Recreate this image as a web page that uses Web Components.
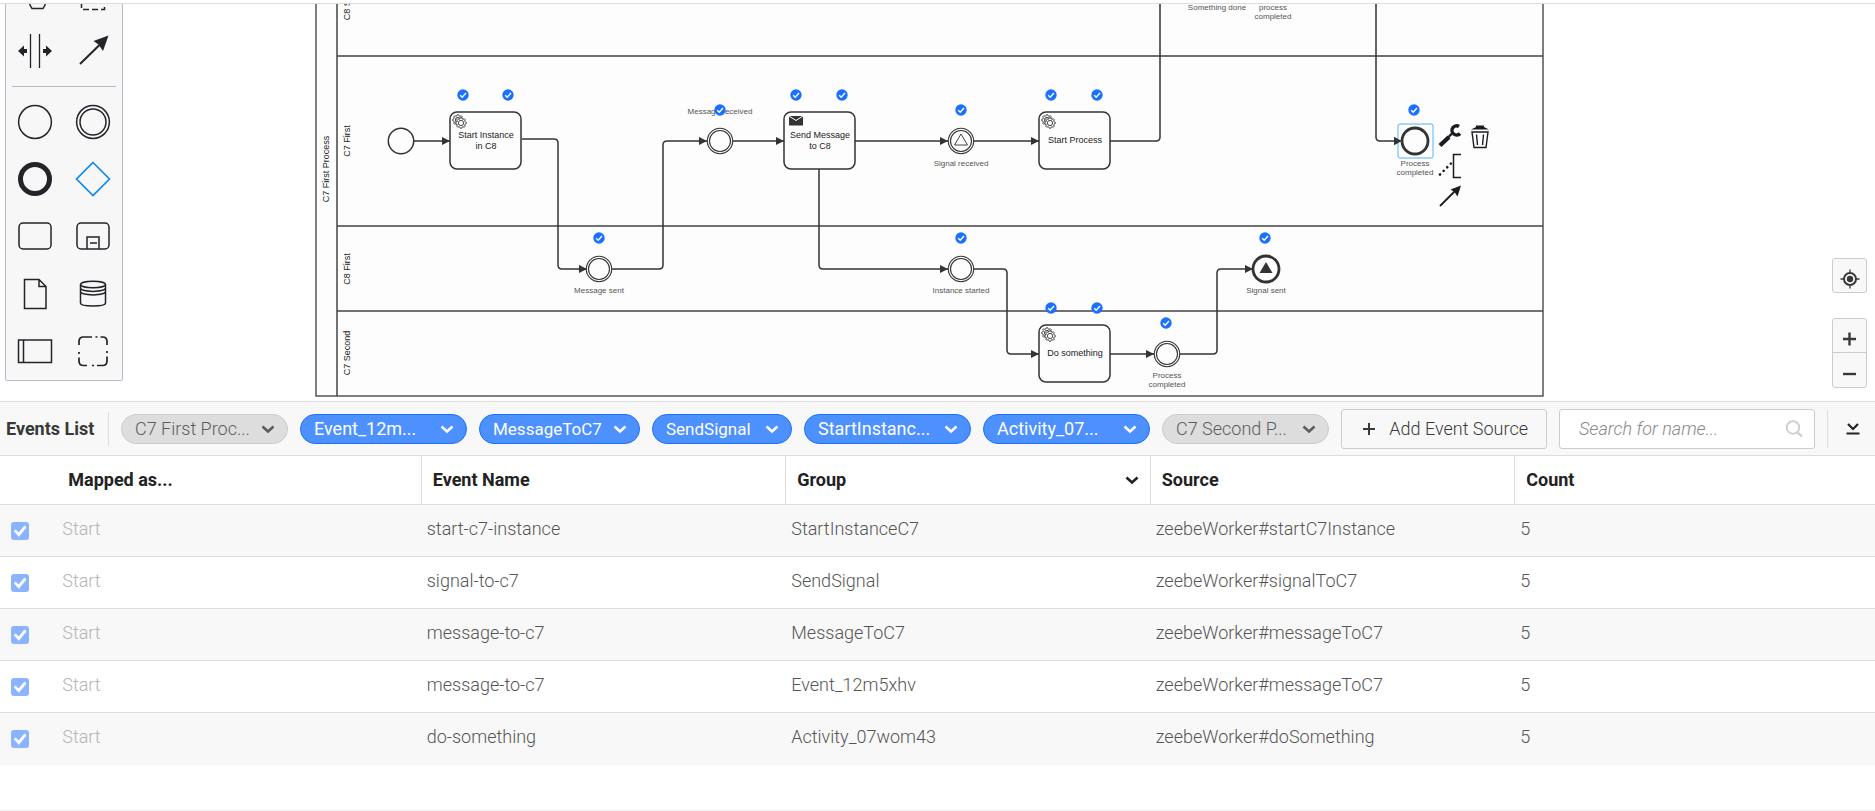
<!DOCTYPE html>
<html lang="en">
<head>
<meta charset="utf-8">
<title>Events List</title>
<style>
  html, body { margin: 0; height: 100%; }
  body {
    --ui: Roboto, "Liberation Sans", sans-serif;
    font: 18px/24px var(--ui);
    color: #222;
    background: #fff;
  }
</style>
</head>
<body>
<modeler-app>
  <diagram-canvas slot="canvas"></diagram-canvas>
  <events-toolbar slot="toolbar">
    <event-pill>C7 First Proc...</event-pill>
    <event-pill active>Event_12m...</event-pill>
    <event-pill active size="m">MessageToC7</event-pill>
    <event-pill active size="s">SendSignal</event-pill>
    <event-pill active>StartInstanc...</event-pill>
    <event-pill active>Activity_07...</event-pill>
    <event-pill>C7 Second P...</event-pill>
  </events-toolbar>
  <events-table slot="table"></events-table>
</modeler-app>

<script>
const define = (name, html) => {
  const template = document.createElement('template');
  template.innerHTML = html;
  customElements.define(name, class extends HTMLElement {
    constructor() {
      super();
      this.attachShadow({ mode: 'open' }).append(template.content.cloneNode(true));
    }
  });
};

/* ---------- shell ---------- */
define('modeler-app', `
<style>
  :host { display: flex; flex-direction: column; min-height: 100vh; box-sizing: border-box; padding-top: 3px; }
  main { flex: 1 1 0; min-height: 240px; display: flex; border-top: 1px solid #ddd; }
  ::slotted(diagram-canvas) { flex: 1; }
  section { border-top: 1px solid #ddd; border-bottom: 1px solid #eee; padding-bottom: 45px; }
</style>
<main><slot name="canvas"></slot></main>
<section><slot name="toolbar"></slot><slot name="table"></slot></section>`);

/* ---------- diagram ---------- */
const gear = (x, y) => {
  let d = '';
  for (let i = 0; i < 32; i++) {
    const a = (i - .5) * Math.PI / 16, r = i % 4 < 2 ? 5.4 : 4.2;
    d += (i ? 'L' : 'M') + (x + r * Math.cos(a)).toFixed(2) + ' ' + (y + r * Math.sin(a)).toFixed(2);
  }
  return `<path class="gear" d="${d}Z"/><circle class="gear" cx="${x}" cy="${y}" r="2.6"/>`;
};
const task = (x, y, lines, kind) => `
  <rect class="shape" x="${x}" y="${y}" width="71" height="57" rx="7"/>
  ${kind === 'send'
    ? `<path d="M${x + 5} ${y + 4}h14v9.500h-14z" fill="#333"/><path d="M${x + 5} ${y + 4}l7 4.500l7-4.500" fill="none" stroke="#fff" stroke-width="1"/>`
    : gear(x + 8, y + 8) + gear(x + 11, y + 11)}
  ${lines.map((t, i) => `<text class="task" x="${x + 36}" y="${y + (lines.length > 1 ? 26 : 31) + i * 11}">${t}</text>`).join('')}`;
const event = (x, y, kind) => kind === 'end'
  ? `<circle class="shape" cx="${x}" cy="${y}" r="13" style="stroke-width:2.800"/>`
  : `<circle class="shape ${kind === 'mid' ? 'thin' : ''}" cx="${x}" cy="${y}" r="12.700"/>` +
    (kind === 'mid' ? `<circle class="shape thin" cx="${x}" cy="${y}" r="10.500"/>` : '');
const label = (x, y, lines) => lines.map((t, i) => `<text class="label" x="${x}" y="${y + i * 9}">${t}</text>`).join('');
const side = (x, y, t) => `<text class="side" transform="translate(${x} ${y}) rotate(-90)">${t}</text>`;
const flow = d => `<path class="flow" d="${d}"/>`;
const line = d => `<path class="flow plain" d="${d}"/>`;
const check = ([x, y]) => `<g transform="translate(${x} ${y})"><circle r="5.700" fill="#1a70ff"/><path d="M-2.800 .2L-.8 2.200L3-1.900" fill="none" stroke="#fff" stroke-width="1.400"/></g>`;

define('diagram-canvas', `
<style>
  :host { display: block; position: relative; overflow: hidden; background: #fff; }
  .diagram { position: absolute; top: 0; left: 0; width: 100%; height: 100%; }
  .lane, .shape { fill: #fdfdfd; stroke: #333; stroke-width: 1.500; }
  .lane { stroke: #555; }
  .rule { stroke: #444; stroke-width: 1.500; fill: none; }
  .shape.thin { stroke-width: 1.100; }
  .flow { fill: none; stroke: #333; stroke-width: 1.500; stroke-linejoin: round; marker-end: url(#tip); }
  .plain { marker-end: none; }
  .gear { fill: #fdfdfd; stroke: #444; stroke-width: 1; }
  text { font-family: "Liberation Sans", Arial, sans-serif; fill: #222; text-anchor: middle; }
  .task, .side { font-size: 9px; }
  .label { font-size: 8px; fill: #555; }
</style>
<svg class="diagram" role="img" aria-label="C7 First Process">
  <defs><marker id="tip" viewBox="0 0 8 8" refX="8" refY="4" markerWidth="8" markerHeight="8" markerUnits="userSpaceOnUse" orient="auto"><path d="M0 0L8 4L0 8z" fill="#333"/></marker></defs>
  <g transform="translate(0 -4)">
    <rect class="lane" x="316" y="-80" width="1227" height="476"/>
    <path class="rule" d="M337-80V396M337 56H1543M337 226H1543M337 311H1543"/>
    ${side(329, 169, 'C7 First Process')}
    ${side(350, 141, 'C7 First')}${side(350, 269, 'C8 First')}${side(350, 353, 'C7 Second')}${side(350, -2, 'C8 Second')}
    ${flow('M414 141H450')}
    ${flow('M522 139H554q4 0 4 4V265q0 4 4 4H587')}
    ${flow('M612 269H659q4 0 4-4V145q0-4 4-4H707')}
    ${flow('M733 141H784')}${flow('M855 141H948')}${flow('M974 141H1039')}
    ${line('M1110 141H1156q4 0 4-4V-10')}
    ${flow('M819 169V265q0 4 4 4H948')}
    ${flow('M974 269H1003q4 0 4 4V350q0 4 4 4H1039')}
    ${flow('M1110 354H1154')}
    ${flow('M1180 354H1213q4 0 4-4V273q0-4 4-4H1253')}
    ${flow('M1376-10V137q0 4 4 4H1402')}
    ${event(401, 141, 'start')}
    ${task(450, 112, ['Start Instance', 'in C8'])}
    ${label(599, 293, ['Message sent'])}${event(599, 269, 'mid')}
    ${label(720, 114, ['Message received'])}${event(720, 141, 'mid')}
    ${task(784, 112, ['Send Message', 'to C8'], 'send')}
    ${event(961, 141, 'mid')}<path d="M961 134l6.500 11h-13z" fill="none" stroke="#444"/>${label(961, 166, ['Signal received'])}
    ${task(1039, 112, ['Start Process'])}
    ${event(961, 269, 'mid')}${label(961, 293, ['Instance started'])}
    ${task(1039, 325, ['Do something'])}
    ${event(1167, 354, 'mid')}${label(1167, 378, ['Process', 'completed'])}
    ${event(1266, 269, 'end')}<path d="M1266 262l6.500 11h-13z" fill="#333"/>${label(1266, 293, ['Signal sent'])}
    ${label(1217, 10, ['Something done'])}${label(1273, 10, ['process', 'completed'])}
    <rect x="1398" y="124" width="35" height="34" rx="2" fill="#fff" stroke="#52b4fb"/>
    ${event(1415, 141, 'end')}${label(1415, 166, ['Process', 'completed'])}
    <path d="M1402 141l-8-4v8z" fill="#333"/>
    ${[[463,95],[508,95],[720,110],[796,95],[842,95],[961,110],[1051,95],[1097,95],[599,238],[961,238],
       [1051,308],[1097,308],[1166,323],[1265,238],[1414,110]].map(check).join('')}
  </g>
</svg>
<tool-palette></tool-palette>
<context-pad></context-pad>
<zoom-controls></zoom-controls>`);

/* ---------- tool palette ---------- */
const tool = (name, body) => `<button type="button" aria-label="${name}"><svg viewBox="0 0 36 36" width="36" height="36">${body}</svg></button>`;
define('tool-palette', `
<style>
  :host { position: absolute; left: 5px; top: -40px; width: 116px; background: #f7f7f8; border: 1px solid #b8b8c8; border-radius: 2px; }
  div { display: grid; grid-template-columns: 1fr 1fr; grid-auto-rows: 1fr; }
  .tools { height: 114px; }
  .shapes { height: 287px; }
  hr { margin: 7px 6px 6px; border: 0; height: 1px; background: #b8b8c8; }
  button { border: 0; padding: 0; background: none; display: grid; place-items: center; }
  svg { fill: none; stroke: #22242a; stroke-width: 1.500; }
</style>
<div class="tools">
  ${tool('Hand tool', '<path d="M12 20l1 9 2 3.500h11l2-3.500V16" stroke-width="1.500"/>')}
  ${tool('Lasso tool', '<path d="M6.500 8v25.500h23V8" stroke-dasharray="6 3"/>')}
  ${tool('Create/remove space tool', '<path d="M13.500 1v34M22.500 1v34" stroke-width="1.300"/><path d="M1 18l6-5.500v3.500h3v4h-3v3.500zM35 18l-6-5.500v3.500h-3v4h3v3.500z" fill="#22242a" stroke="none"/>')}
  ${tool('Connect tool', '<path d="M5 31L26 10.500" stroke-width="2"/><path d="M33.500 2.500L18.500 8l5 3.500L28 18z" fill="#22242a" stroke="none"/>')}
</div>
<hr>
<div class="shapes">
  ${tool('Start event', '<circle cx="18" cy="18" r="16.400"/>')}
  ${tool('Intermediate event', '<circle cx="18" cy="18" r="16.400"/><circle cx="18" cy="18" r="13"/>')}
  ${tool('End event', '<circle cx="18" cy="18" r="14.500" stroke-width="5"/>')}
  ${tool('Gateway', '<path d="M18 1.500L34.500 18L18 34.500L1.500 18z" stroke="#0c8cf0" stroke-width="1.700"/>')}
  ${tool('Task', '<rect x="2" y="5" width="32" height="26" rx="4"/>')}
  ${tool('Sub process', '<rect x="2" y="5" width="32" height="26" rx="4"/><path d="M12 31V19h12v12M15 25h7"/>')}
  ${tool('Data object', '<path d="M7.500 3.500H22l7 7v22H7.500zM22 3.500v7h7"/>')}
  ${tool('Data store', '<ellipse cx="18" cy="8.500" rx="12.500" ry="3.200"/><path d="M5.500 8.500v18.500c0 4 25 4 25 0V8.500M5.500 12c0 4.500 25 4.500 25 0M5.500 15.500c0 4.500 25 4.500 25 0"/>')}
  ${tool('Pool', '<path d="M1.500 7h33v22.500h-33zM6.500 7v22.500"/>')}
  ${tool('Group', '<path d="M4 12V8.500q0-4.500 4.500-4.500H17M20.500 4h2M25.500 4h2q4.500 0 4.500 4.500V12M32 18v2M32 23.500V28q0 4.500-4.500 4.500H22M19 32.500h-2M12 32.500H8.500Q4 32.500 4 28v-3.500M4 21v-2" stroke-width="1.700"/>')}
</div>`);

/* ---------- context pad of the selected event ---------- */
define('context-pad', `
<style>
  :host { position: absolute; left: 1436px; top: 118px; }
  div { display: grid; grid-template-columns: 26px 26px; grid-auto-rows: 28px; column-gap: 5px; row-gap: 2px; }
  button { border: 0; padding: 0; background: none; display: block; }
  .low { grid-column: 1; }
  svg { display: block; fill: none; stroke: #1b1c20; }
</style>
<div>
  <button type="button" aria-label="Change element"><svg width="26" height="28" viewBox="0 0 26 28"><path d="M4 23.500L13 15" stroke-width="4.300"/><path d="M12.500 15l4-4" stroke-width="2.400"/><path d="M23 4.500A4.600 4.600 0 1 0 24 11.500" stroke-width="3.400"/></svg></button>
  <button type="button" aria-label="Delete"><svg width="26" height="28" viewBox="0 0 26 28"><path d="M4 7.500L9 5V3.500h8V5l5 2.500z" fill="#1b1c20" stroke="none"/><path d="M5 10h16l-2 15.500H7zM9.500 12.500l1 10.500M16.500 12.500l-1 10.500" stroke-width="1.400"/></svg></button>
  <button class="low" type="button" aria-label="Add text annotation"><svg width="26" height="28" viewBox="0 0 26 28"><path d="M25 2.500h-7.500v23H25" stroke-width="1.500"/><path d="M4 22.500L15 11.500" stroke-width="2.600" stroke-linecap="round" stroke-dasharray=".1 5"/></svg></button>
  <button class="low" type="button" aria-label="Connect"><svg width="26" height="28" viewBox="0 0 26 28"><path d="M4 24L20 8" stroke-width="1.800"/><path d="M25 3.500L14.500 7.500l4 2.500 3 4.500z" fill="#1b1c20" stroke="none"/></svg></button>
</div>`);

/* ---------- zoom controls ---------- */
define('zoom-controls', `
<style>
  :host { position: absolute; right: 8px; bottom: 13px; display: flex; flex-direction: column; gap: 25px; }
  .box { width: 35px; box-sizing: border-box; border: 1px solid #ccc; border-radius: 3px; background: #f8f8f8; display: flex; flex-direction: column; }
  button { height: 33px; box-sizing: border-box; border: 0; padding: 7px 0 0; background: none; display: grid; place-items: center; }
  button + button { border-top: 1px solid #ccc; height: 35px; }
  svg { display: block; fill: none; stroke: #393939; }
</style>
<div class="box"><button type="button" aria-label="Reset zoom"><svg width="20" height="20" viewBox="0 0 20 20"><circle cx="10" cy="10" r="6" stroke-width="2"/><circle cx="10" cy="10" r="3.200" fill="#393939" stroke="none"/><path d="M10 .5v4M10 15.500v4M.5 10h4M15.500 10h4" stroke-width="1.300"/></svg></button></div>
<div class="box">
  <button type="button" aria-label="Zoom in"><svg width="20" height="20" viewBox="0 0 20 20"><path d="M3 10h13M9.500 3.500v13" stroke-width="2.400"/></svg></button>
  <button type="button" aria-label="Zoom out"><svg width="20" height="20" viewBox="0 0 20 20"><path d="M3 10h13" stroke-width="2.400"/></svg></button>
</div>`);

/* ---------- toolbar ---------- */
const chevron = '<svg width="14" height="14" viewBox="0 0 14 14" fill="none" stroke="currentColor" stroke-width="2.600"><path d="M1.500 4.500L7 9.500L12.500 4.500"/></svg>';
define('event-pill', `
<style>
  :host { display: block; flex: none; width: 167px; }
  :host([size="m"]) { width: 161px; }
  :host([size="s"]) { width: 140px; }
  button { width: 100%; height: 30px; box-sizing: border-box; padding: 0 12px 0 13px; border: 1px solid #ccc; border-radius: 15px;
    background: #ddd; color: #5c5c5c; font: 300 18px/28px var(--ui); display: flex; align-items: center; justify-content: space-between; white-space: nowrap; }
  :host([active]) button { background: #4d90ff; border-color: #1a70ff; color: #fff; font-weight: 400; }
  :host([size]) button { font-size: 17px; }
</style>
<button type="button"><span><slot></slot></span>${chevron}</button>`);

define('events-toolbar', `
<style>
  :host { display: flex; align-items: center; height: 54px; box-sizing: border-box; background: #f8f8f8; border-bottom: 1px solid #ddd; }
  h2 { flex: none; box-sizing: border-box; margin: 0; padding-left: 6px; width: 109px; font: 700 18px/34px var(--ui); color: #393939; border-right: 1px solid #ddd; white-space: nowrap; }
  .pills { display: flex; gap: 12px; padding: 0 12px; }
  .add { flex: none; width: 206px; height: 40px; box-sizing: border-box; border: 1px solid #ccc; border-radius: 3px; background: #f8f8f8; color: #393939;
    font: 300 18px/24px var(--ui); padding: 0 18px 0 21px; display: flex; align-items: center; justify-content: space-between; white-space: nowrap; }
  label { flex: 1; min-width: 120px; height: 38px; margin: 0 12px; border: 1px solid #ccc; border-radius: 3px; background: #fff; display: flex; align-items: center; padding: 0 11px 0 19px; }
  input { flex: 1; min-width: 0; border: 0; padding: 0; outline: 0; background: none; font: italic 300 18px/24px var(--ui); color: #222; }
  input::placeholder { color: #888; opacity: 1; }
  .fold { width: 48px; height: 38px; border: 0; border-left: 1px solid #ddd; padding: 0 0 0 2px; background: none; display: grid; place-items: center; }
  svg { display: block; }
</style>
<h2>Events List</h2>
<div class="pills"><slot></slot></div>
<button class="add" type="button"><svg width="12" height="12" viewBox="0 0 12 12" stroke="#393939" stroke-width="2"><path d="M6 0v12M0 6h12"/></svg>Add Event Source</button>
<label><input type="text" aria-label="Search for name" placeholder="Search for name..."><svg width="18" height="18" viewBox="0 0 18 18" fill="none" stroke="#ccc" stroke-width="1.800"><circle cx="8" cy="7.500" r="6.300"/><path d="M12 12l5 4.500" stroke-width="2.200"/></svg></label>
<button class="fold" type="button" aria-label="Collapse panel"><svg width="14" height="14" viewBox="0 0 14 14" fill="none" stroke="#222" stroke-width="2.200"><path d="M2 2l5 5 5-5M.5 11.500h13"/></svg></button>`);

/* ---------- table ---------- */
const rows = [
  ['start-c7-instance', 'StartInstanceC7', 'zeebeWorker#startC7Instance'],
  ['signal-to-c7', 'SendSignal', 'zeebeWorker#signalToC7'],
  ['message-to-c7', 'MessageToC7', 'zeebeWorker#messageToC7'],
  ['message-to-c7', 'Event_12m5xhv', 'zeebeWorker#messageToC7'],
  ['do-something', 'Activity_07wom43', 'zeebeWorker#doSomething']
];
define('events-table', `
<style>
  :host { display: block; }
  table { width: 100%; border-collapse: separate; border-spacing: 0; table-layout: fixed; }
  .tick { width: 3%; }
  .data { width: 19.440%; }
  th { height: 48px; padding: 0 11px; text-align: left; font: 700 18px/24px var(--ui); border-bottom: 1px solid #ddd; }
  th:nth-child(2) { padding-left: 12px; }
  th:nth-child(n+3) { border-left: 1px solid #ddd; }
  th > div { display: flex; justify-content: space-between; align-items: center; }
  td { height: 47px; padding: 0 6px 4px; border-bottom: 1px solid #ddd; font: 300 18px/24px var(--ui); color: #555; }
  td:first-child { padding: 0 0 0 11px; height: 51px; }
  td:nth-child(2) { color: #b4b4b4; }
  tbody tr:nth-child(odd) { background: #f8f8f8; }
  tbody tr:last-child td { border-bottom-color: #f8f8f8; }
  th, td { box-sizing: content-box; }
  input { appearance: none; display: block; width: 18px; height: 18px; margin: 0; border-radius: 3px; background: #8ab4ff; position: relative; }
  input::after { content: ""; position: absolute; inset: 2px; background: #fff; clip-path: polygon(5% 55%, 20% 42%, 40% 65%, 82% 14%, 96% 28%, 42% 94%); }
  svg { display: block; }
</style>
<table>
  <colgroup><col class="tick"><col class="data"><col class="data"><col class="data"><col class="data"><col></colgroup>
  <thead><tr><th></th><th scope="col">Mapped as...</th><th scope="col">Event Name</th><th scope="col" aria-sort="descending"><div>Group${chevron}</div></th><th scope="col">Source</th><th scope="col">Count</th></tr></thead>
  <tbody>${rows.map(r => `<tr><td><input type="checkbox" checked disabled aria-label="Map ${r[0]}"></td><td>Start</td>${r.map(c => `<td>${c}</td>`).join('')}<td>5</td></tr>`).join('')}</tbody>
</table>`);
</script>
</body>
</html>
